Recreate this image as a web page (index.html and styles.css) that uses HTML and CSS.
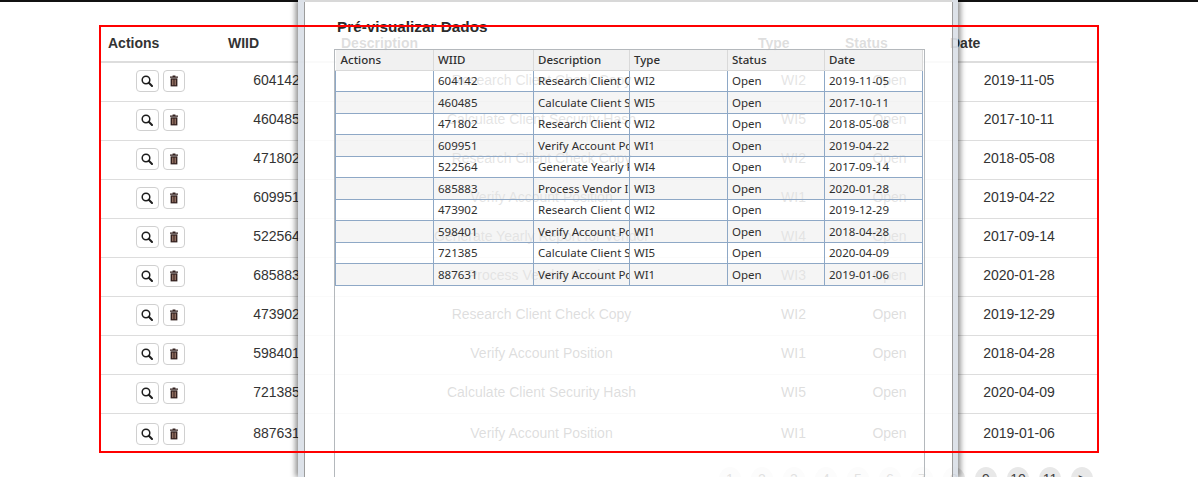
FILE: index.html
```html
<!DOCTYPE html>
<html lang="pt-br">
<head>
    <meta charset="UTF-8">
    <meta name="viewport" content="width=device-width, initial-scale=1.0">
    <title>Pré-visualizar Dados</title>
    <link rel="stylesheet" href="styles.css">
</head>
<body>

<svg class="icon-defs" width="0" height="0">
    <symbol id="icon-search" viewBox="0 0 12 12">
        <circle cx="5" cy="5" r="3.8" fill="none" stroke="currentColor" stroke-width="1.5"/>
        <path d="M7.8 7.8 L11 11" fill="none" stroke="currentColor" stroke-width="2" stroke-linecap="round"/>
    </symbol>
    <symbol id="icon-trash" viewBox="0 0 12 12">
        <path d="M4.6 1.4 V0.6 H7.4 V1.4 H10 V2.7 H2 V1.4 Z" fill="currentColor"/>
        <path d="M2.6 3.3 H9.4 V11.4 H2.6 Z" fill="currentColor"/>
        <path d="M4.5 4.6 V10.2 M6 4.6 V10.2 M7.5 4.6 V10.2" stroke="#b98f7c" stroke-width=".7"/>
    </symbol>
</svg>

<div class="top-bar"></div>

<table class="main-table">
    <colgroup>
        <col class="col-actions"><col class="col-wiid"><col class="col-desc"><col class="col-type"><col class="col-status"><col class="col-date">
    </colgroup>
    <thead>
        <tr><th>Actions</th><th>WIID</th><th>Description</th><th>Type</th><th>Status</th><th>Date</th></tr>
    </thead>
    <tbody>
        <tr><td><button class="btn"><svg class="icon"><use href="#icon-search"/></svg></button><button class="btn btn-trash"><svg class="icon"><use href="#icon-trash"/></svg></button></td><td>604142</td><td>Research Client Check Copy</td><td>WI2</td><td>Open</td><td>2019-11-05</td></tr>
        <tr><td><button class="btn"><svg class="icon"><use href="#icon-search"/></svg></button><button class="btn btn-trash"><svg class="icon"><use href="#icon-trash"/></svg></button></td><td>460485</td><td>Calculate Client Security Hash</td><td>WI5</td><td>Open</td><td>2017-10-11</td></tr>
        <tr><td><button class="btn"><svg class="icon"><use href="#icon-search"/></svg></button><button class="btn btn-trash"><svg class="icon"><use href="#icon-trash"/></svg></button></td><td>471802</td><td>Research Client Check Copy</td><td>WI2</td><td>Open</td><td>2018-05-08</td></tr>
        <tr><td><button class="btn"><svg class="icon"><use href="#icon-search"/></svg></button><button class="btn btn-trash"><svg class="icon"><use href="#icon-trash"/></svg></button></td><td>609951</td><td>Verify Account Position</td><td>WI1</td><td>Open</td><td>2019-04-22</td></tr>
        <tr><td><button class="btn"><svg class="icon"><use href="#icon-search"/></svg></button><button class="btn btn-trash"><svg class="icon"><use href="#icon-trash"/></svg></button></td><td>522564</td><td>Generate Yearly Report for Vendor</td><td>WI4</td><td>Open</td><td>2017-09-14</td></tr>
        <tr><td><button class="btn"><svg class="icon"><use href="#icon-search"/></svg></button><button class="btn btn-trash"><svg class="icon"><use href="#icon-trash"/></svg></button></td><td>685883</td><td>Process Vendor Invoice</td><td>WI3</td><td>Open</td><td>2020-01-28</td></tr>
        <tr><td><button class="btn"><svg class="icon"><use href="#icon-search"/></svg></button><button class="btn btn-trash"><svg class="icon"><use href="#icon-trash"/></svg></button></td><td>473902</td><td>Research Client Check Copy</td><td>WI2</td><td>Open</td><td>2019-12-29</td></tr>
        <tr><td><button class="btn"><svg class="icon"><use href="#icon-search"/></svg></button><button class="btn btn-trash"><svg class="icon"><use href="#icon-trash"/></svg></button></td><td>598401</td><td>Verify Account Position</td><td>WI1</td><td>Open</td><td>2018-04-28</td></tr>
        <tr><td><button class="btn"><svg class="icon"><use href="#icon-search"/></svg></button><button class="btn btn-trash"><svg class="icon"><use href="#icon-trash"/></svg></button></td><td>721385</td><td>Calculate Client Security Hash</td><td>WI5</td><td>Open</td><td>2020-04-09</td></tr>
        <tr><td><button class="btn"><svg class="icon"><use href="#icon-search"/></svg></button><button class="btn btn-trash"><svg class="icon"><use href="#icon-trash"/></svg></button></td><td>887631</td><td>Verify Account Position</td><td>WI1</td><td>Open</td><td>2019-01-06</td></tr>
    </tbody>
</table>

<div class="pagination">
    <span>1</span><span>2</span><span>3</span><span>4</span><span>5</span><span>6</span><span>7</span><span>8</span><span>9</span><span>10</span><span>11</span><span>&gt;</span>
</div>

<div class="modal">
    <div class="modal-body">
        <h3 class="modal-title">Pré-visualizar Dados</h3>
        <div class="preview-box">
            <table class="preview-table">
                <colgroup>
                    <col class="pv-actions"><col class="pv-wiid"><col class="pv-desc"><col class="pv-type"><col class="pv-status"><col class="pv-date">
                </colgroup>
                <thead>
                    <tr><th>Actions</th><th>WIID</th><th>Description</th><th>Type</th><th>Status</th><th>Date</th></tr>
                </thead>
                <tbody>
                    <tr><td></td><td>604142</td><td>Research Client Check Copy</td><td>WI2</td><td>Open</td><td>2019-11-05</td></tr>
                    <tr><td></td><td>460485</td><td>Calculate Client Security Hash</td><td>WI5</td><td>Open</td><td>2017-10-11</td></tr>
                    <tr><td></td><td>471802</td><td>Research Client Check Copy</td><td>WI2</td><td>Open</td><td>2018-05-08</td></tr>
                    <tr><td></td><td>609951</td><td>Verify Account Position</td><td>WI1</td><td>Open</td><td>2019-04-22</td></tr>
                    <tr><td></td><td>522564</td><td>Generate Yearly Report for Vendor</td><td>WI4</td><td>Open</td><td>2017-09-14</td></tr>
                    <tr><td></td><td>685883</td><td>Process Vendor Invoice</td><td>WI3</td><td>Open</td><td>2020-01-28</td></tr>
                    <tr><td></td><td>473902</td><td>Research Client Check Copy</td><td>WI2</td><td>Open</td><td>2019-12-29</td></tr>
                    <tr><td></td><td>598401</td><td>Verify Account Position</td><td>WI1</td><td>Open</td><td>2018-04-28</td></tr>
                    <tr><td></td><td>721385</td><td>Calculate Client Security Hash</td><td>WI5</td><td>Open</td><td>2020-04-09</td></tr>
                    <tr><td></td><td>887631</td><td>Verify Account Position</td><td>WI1</td><td>Open</td><td>2019-01-06</td></tr>
                </tbody>
            </table>
        </div>
    </div>
</div>

<div class="red-frame"></div>

</body>
</html>
```

FILE: styles.css
```css
html, body {
    height: 477px;
    overflow: hidden;
}
body {
    margin: 0;
    position: relative;
    background-color: #fff;
    font-family: "Liberation Sans", Arial, sans-serif;
    font-size: 14px;
    color: #333;
}
.icon-defs {
    position: absolute;
}
.top-bar {
    height: 2px;
    background-color: #111;
}

/* Tabela principal */
.main-table {
    width: 998px;
    margin: 22px 0 0 100px;
    table-layout: fixed;
    border-collapse: collapse;
}
.col-actions { width: 120px; }
.col-wiid { width: 113px; }
.col-desc { width: 417px; }
.col-type { width: 87px; }
.col-status { width: 105px; }
.col-date { width: 156px; }
.main-table th {
    height: 37px;
    padding: 0 8px;
    text-align: left;
    font-weight: bold;
    border-bottom: 2px solid #ddd;
}
.main-table td {
    height: 34px;
    padding: 0 8px 4px;
    text-align: center;
    border-bottom: 1px solid #ddd;
}
.main-table td:first-child {
    padding-bottom: 2px;
    height: 36px;
}
.main-table td:last-child {
    padding-right: 10px;
}
.main-table tbody tr:last-child td {
    padding-top: 2px;
    border-bottom: 0;
}
.btn {
    display: inline-flex;
    align-items: center;
    justify-content: center;
    width: 23px;
    height: 22px;
    padding: 0;
    vertical-align: middle;
    background-color: #fff;
    border: 1px solid #d0d0d0;
    border-radius: 4px;
    color: #1d1d1d;
}
.btn-trash {
    width: 22px;
    margin-left: 4px;
    color: #33211f;
}
.icon {
    width: 12px;
    height: 12px;
}

/* Paginação */
.pagination {
    position: absolute;
    top: 467px;
    left: 719px;
    display: flex;
    gap: 10px;
}
.pagination span {
    width: 22px;
    height: 24px;
    line-height: 24px;
    text-align: center;
    border-radius: 50%;
    background-color: #e8e8e8;
    color: #444;
}

/* Janela sobre a página */
.modal {
    position: absolute;
    top: 0;
    left: 298px;
    width: 660px;
    height: 477px;
    box-sizing: border-box;
    padding-top: 2px;
    border-left: 7px solid rgba(218, 224, 231, .93);
    border-right: 6px solid rgba(218, 224, 231, .93);
    box-shadow: -3px 0 5px rgba(0, 0, 0, .38), 3px 0 5px rgba(0, 0, 0, .38);
    background: linear-gradient(#d8d8d8 2px, transparent 2px);
}
.modal-body {
    height: 475px;
    box-sizing: border-box;
    padding: 15px 0 0 29px;
    background-color: rgba(255, 255, 255, .84);
    box-shadow: -1px 0 0 #9c9c9c, 1px 0 0 #9c9c9c;
}
.modal-title {
    margin: 0 0 13px 3px;
    height: 19px;
    line-height: 19px;
    font-size: 15.3px;
    font-weight: bold;
    color: #2b2b2b;
}
.preview-box {
    width: 591px;
    height: 431px;
    box-sizing: border-box;
    border: 1px solid #b4b8bc;
    border-bottom: 0;
}
.preview-table {
    width: 587px;
    table-layout: fixed;
    border-collapse: collapse;
    font-family: "Noto Sans", Tahoma, sans-serif;
    font-size: 11.5px;
    color: #2f2f2f;
}
.pv-actions { width: 98px; }
.pv-wiid { width: 100px; }
.pv-desc { width: 96px; }
.pv-type { width: 98px; }
.pv-status { width: 97px; }
.pv-date { width: 98px; }
.preview-table th {
    height: 19.5px;
    padding: 0 4px;
    text-align: left;
    font-weight: 500;
    background-color: rgba(240, 240, 240, .9);
    border-right: 1px solid #d9d9d9;
    border-bottom: 1px solid #d9d9d9;
}
.preview-table th:first-child {
    padding-left: 5px;
}
.preview-table td {
    height: 20.5px;
    padding: 0 4px;
    white-space: nowrap;
    overflow: hidden;
    background-color: rgba(255, 255, 255, .2);
    border: 1px solid #8ea8c6;
}
.preview-table tbody tr:nth-child(even) td {
    background-color: rgba(232, 232, 232, .45);
}

/* Contorno vermelho */
.red-frame {
    position: absolute;
    top: 25px;
    left: 99px;
    width: 996px;
    height: 424px;
    border: 2px solid #f00;
}
```
